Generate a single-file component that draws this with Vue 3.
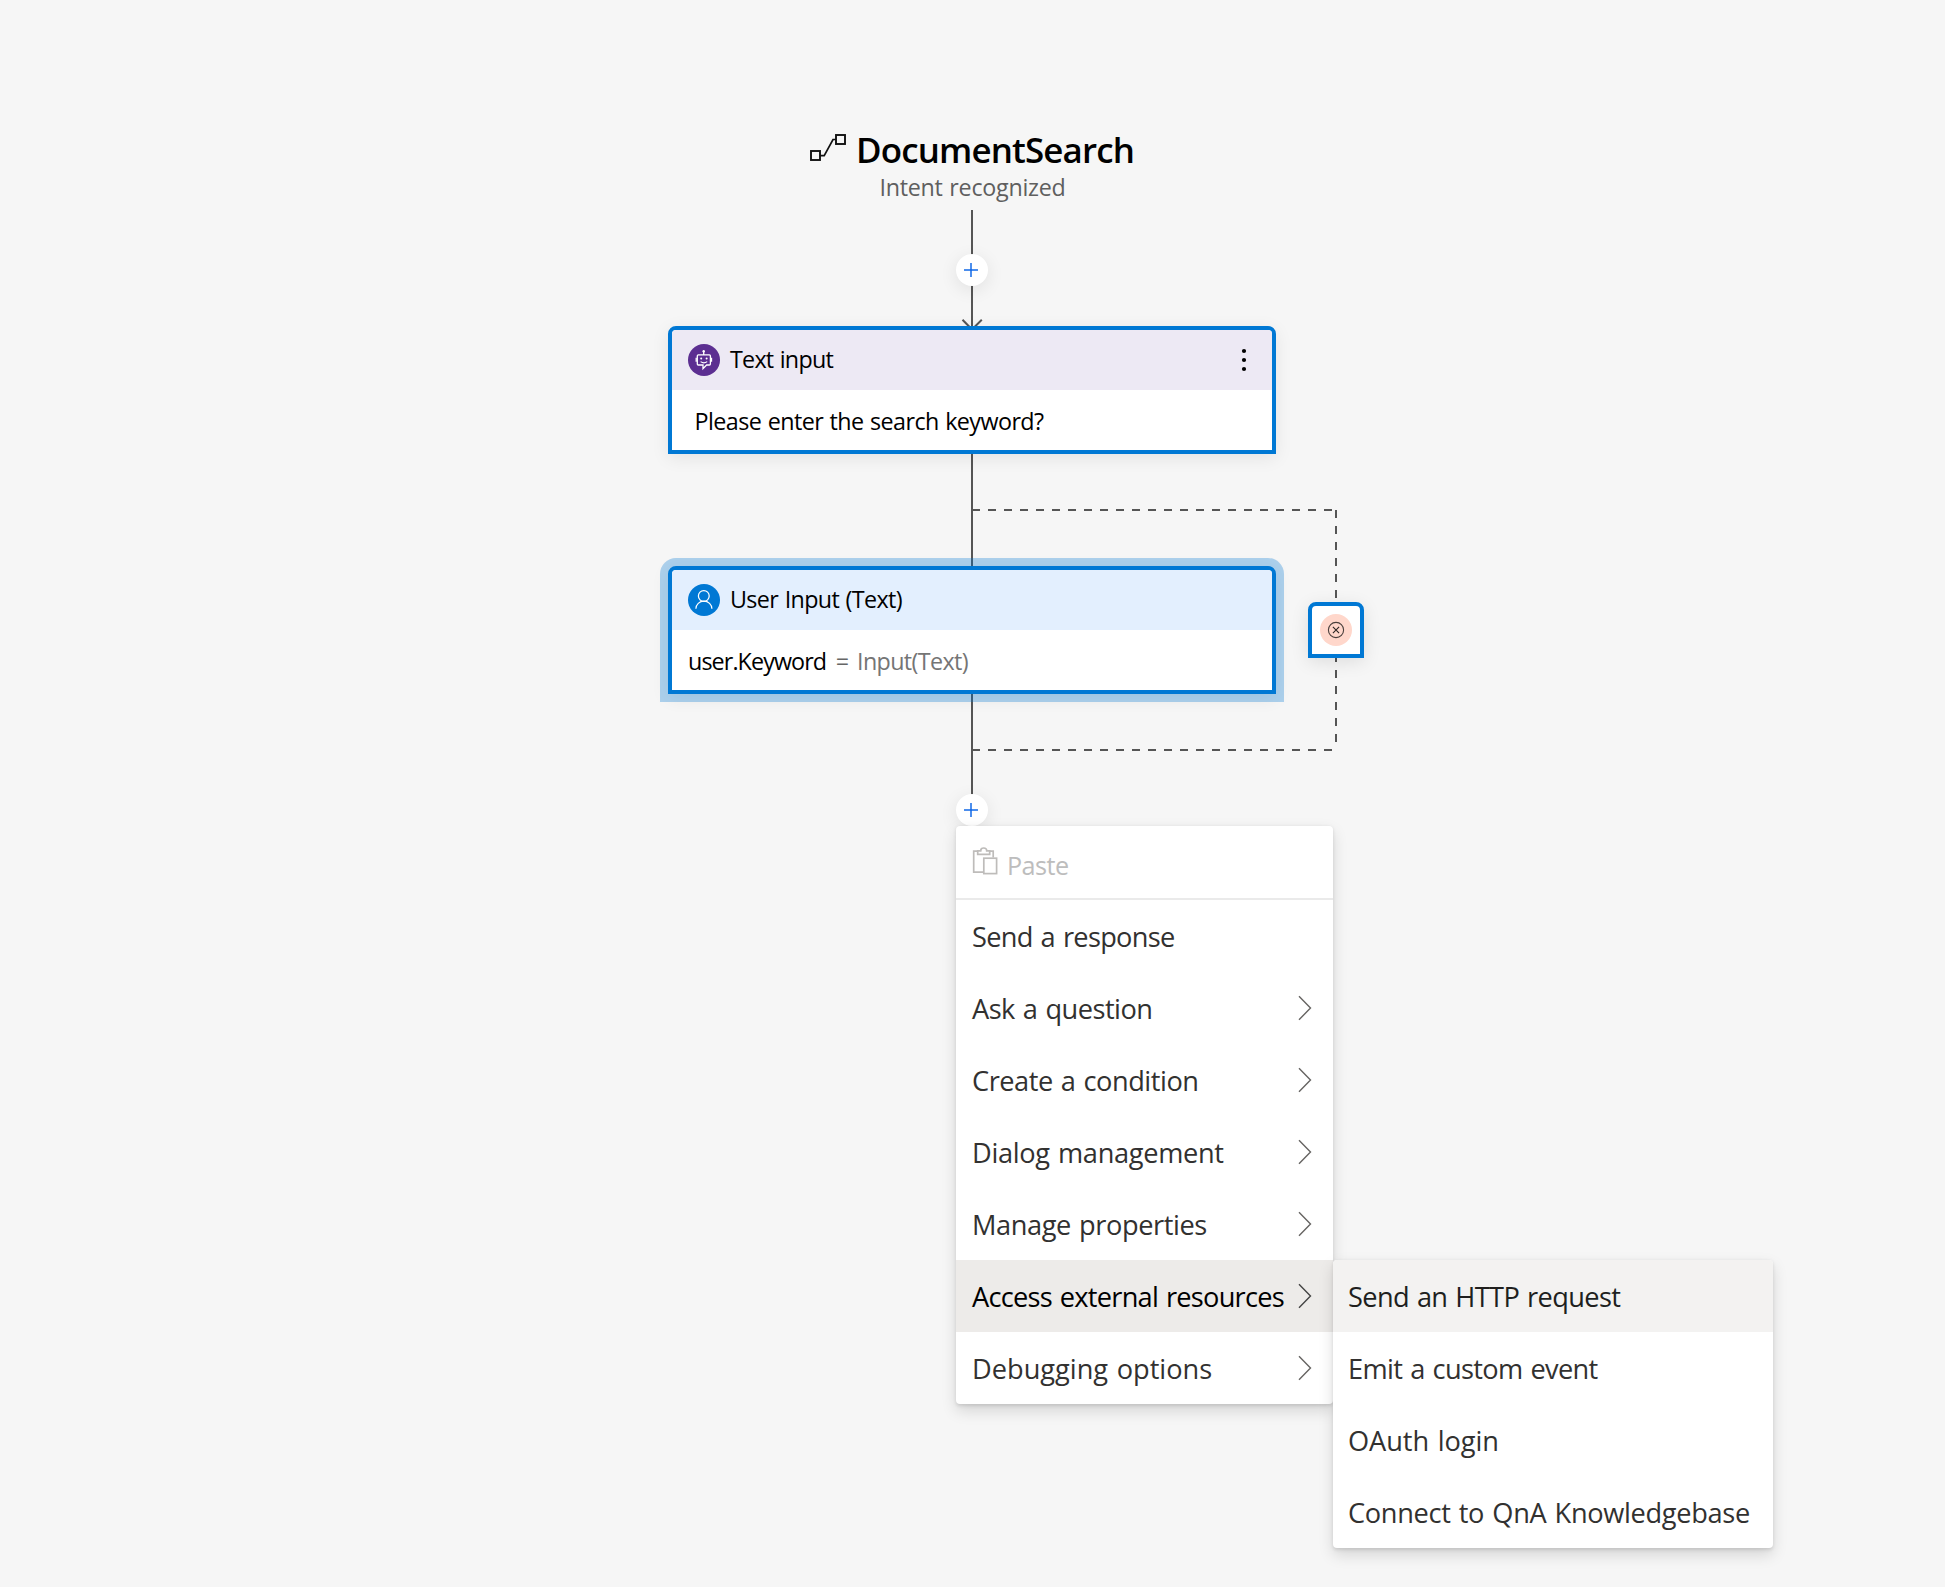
<script setup>
const menuItems = [
  { label: 'Send a response', spacing: -0.69 },
  { label: 'Ask a question', spacing: -0.53, sub: true },
  { label: 'Create a condition', spacing: -0.47, sub: true },
  { label: 'Dialog management', spacing: -0.32, sub: true },
  { label: 'Manage properties', spacing: -0.41, sub: true },
  { label: 'Access external resources', spacing: -0.74, sub: true, open: true },
  { label: 'Debugging options', spacing: 0, sub: true },
]
const subItems = [
  { label: 'Send an HTTP request', spacing: -0.63, hover: true },
  { label: 'Emit a custom event', spacing: -0.65 },
  { label: 'OAuth login', spacing: -0.05 },
  { label: 'Connect to QnA Knowledgebase', spacing: -0.33 },
]
const plusButtons = [270, 810]
</script>

<template>
  <main class="canvas">
    <svg class="edges" width="1945" height="1587" viewBox="0 0 1945 1587" fill="none">
      <g stroke="#555" stroke-width="2">
        <path d="M972 210V810" />
        <path d="M962.5 319.8L972 329.5L981.8 319.8" />
        <g stroke-dasharray="8 8">
          <path d="M972 510H1336" />
          <path d="M1336 510V750" />
          <path d="M972 750H1336" />
        </g>
      </g>
    </svg>

    <header class="trigger">
      <div class="trigger-name">
        <svg width="38" height="30" viewBox="0 0 38 30" fill="none" stroke="#111" stroke-width="1.9">
          <rect x="2" y="18" width="9" height="9" />
          <rect x="27" y="2" width="9" height="9" />
          <path d="M11 22.7H15.2L24 6.5H27" stroke-width="1.7" />
        </svg>
        <h1>DocumentSearch</h1>
      </div>
      <p>Intent recognized</p>
    </header>

    <section class="node prompt">
      <div class="node-head">
        <svg class="avatar" width="32" height="32" viewBox="0 0 32 32" fill="none">
          <circle cx="16" cy="16" r="16" fill="#5c2e91" />
          <g stroke="#fff" stroke-width="1.3">
            <path d="M11.5 21H10.2Q9.3 21 9.3 20V11.9Q9.3 10.9 10.3 10.9H21.4Q22.4 10.9 22.4 11.9V20Q22.4 21 21.4 21H18.6L15 24.6V21H11" />
            <path d="M15.7 7V11M8.2 13.8V17.8M23.5 13.8V17.8" />
            <path d="M12.6 17.6Q15.9 20.2 19.2 17.6" stroke-width="1.2" />
          </g>
          <g fill="#fff">
            <circle cx="15.7" cy="7.2" r="1.2" />
            <circle cx="13.2" cy="14.5" r="1" />
            <circle cx="18.6" cy="14.5" r="1" />
          </g>
        </svg>
        <span class="t-prompt-head">Text input</span>
        <svg class="more" width="6" height="24" viewBox="0 0 6 24" fill="#000">
          <circle cx="3" cy="3" r="2.1" />
          <circle cx="3" cy="12" r="2.1" />
          <circle cx="3" cy="21" r="2.1" />
        </svg>
      </div>
      <div class="node-body"><span class="t-question">Please enter the search keyword?</span></div>
    </section>

    <section class="node answer">
      <div class="node-head">
        <svg class="avatar" width="32" height="32" viewBox="0 0 32 32" fill="none">
          <circle cx="16" cy="16" r="16" fill="#0078d4" />
          <g stroke="#fff" stroke-width="1.25">
            <circle cx="15.8" cy="12" r="5.4" />
            <path d="M7.9 24.8A8 7.7 0 0 1 23.9 24.8" />
          </g>
        </svg>
        <span class="t-answer-head">User Input (Text)</span>
      </div>
      <div class="node-body">
        <span class="t-variable">user.Keyword</span>
        <span class="t-equals">=</span>
        <span class="t-value">Input(Text)</span>
      </div>
    </section>

    <section class="invalid">
      <svg width="32" height="32" viewBox="0 0 32 32" fill="none">
        <circle cx="16" cy="16" r="16" fill="#ffd7cb" />
        <circle cx="16" cy="16" r="7.6" stroke="#4a3f3c" stroke-width="1.1" />
        <path d="M12.9 12.9L19.1 19.1M19.1 12.9L12.9 19.1" stroke="#2b2523" stroke-width="1.1" />
      </svg>
    </section>

    <button v-for="y in plusButtons" :key="y" class="plus" :style="{ top: y - 16 + 'px' }">
      <svg width="32" height="32" viewBox="0 0 32 32">
        <path d="M8 16H22M15 9V23" stroke="#1a6ee8" stroke-opacity=".78" stroke-width="2" />
        <path d="M14 15H16V17H14Z" fill="#1a6ee8" />
      </svg>
    </button>

    <nav class="menu">
      <div class="item paste">
        <svg width="26" height="28" viewBox="0 0 26 28" fill="none" stroke="#bebcba" stroke-width="1.7">
          <path d="M11 25.2H1.7V4.2H5.9M17.5 4.2H21.2V10.4" />
          <path d="M5.7 3.9V7.3H17.7V3.9H14.7Q14.7 1 11.7 1Q8.7 1 8.7 3.9Z" />
          <rect x="11.8" y="11.2" width="12.8" height="15.4" />
        </svg>
        <span>Paste</span>
      </div>
      <div v-for="item in menuItems" :key="item.label" class="item" :class="{ open: item.open }">
        <span :style="{ letterSpacing: item.spacing + 'px' }">{{ item.label }}</span>
        <svg v-if="item.sub" class="chevron" width="14" height="26" viewBox="0 0 14 26" fill="none" stroke="currentColor" stroke-width="1.4">
          <path d="M1 1.2L12.5 13L1 24.8" />
        </svg>
      </div>
    </nav>

    <nav class="menu submenu">
      <div v-for="item in subItems" :key="item.label" class="item" :class="{ hover: item.hover }">
        <span :style="{ letterSpacing: item.spacing + 'px' }">{{ item.label }}</span>
      </div>
    </nav>
  </main>
</template>

<style>
body {
  margin: 0;
  background: #f6f6f6;
}
</style>

<style scoped>
.canvas {
  position: relative;
  width: 1945px;
  height: 1587px;
  overflow: hidden;
  background: #f6f6f6;
  font-family: "Open Sans", "Noto Sans", sans-serif;
  font-size: 23.3px;
  color: #000;
  white-space: nowrap;
}
.canvas * {
  box-sizing: border-box;
}
.edges {
  position: absolute;
  inset: 0;
}
.trigger {
  position: absolute;
  left: 809px;
  top: 124px;
  width: 326px;
}
.trigger-name {
  display: flex;
  align-items: center;
  height: 50px;
  gap: 9px;
}
.trigger-name svg {
  margin-bottom: 2px;
}
.trigger h1 {
  margin: 0;
  padding-top: 2px;
  font-size: 34.9px;
  font-weight: 600;
  line-height: 50px;
  letter-spacing: -0.84px;
}
.trigger p {
  margin: -2px 0 0 70.5px;
  line-height: 30px;
  letter-spacing: -0.28px;
  word-spacing: 1px;
  color: #5f5f5f;
}

.node {
  position: absolute;
  left: 668px;
  width: 608px;
  height: 128px;
  border: 4px solid #0078d4;
  border-radius: 8px 8px 0 0;
  background: #fff;
}
.prompt {
  top: 326px;
  box-shadow: 0 4px 18px rgba(0, 0, 0, 0.08);
}
.answer {
  top: 566px;
  box-shadow: 0 0 0 8px rgba(0, 120, 212, 0.3), 0 4px 18px rgba(0, 0, 0, 0.08);
}
.node-head,
.node-body {
  display: flex;
  align-items: center;
  height: 60px;
  padding: 0 16px;
}
.node-head {
  gap: 10px;
  border-radius: 4px 4px 0 0;
}
.prompt .node-head {
  background: #ede9f4;
}
.answer .node-head {
  background: #e3effe;
}
.node-head span {
  padding-bottom: 2px;
}
.node-body span {
  padding-top: 2px;
}
.more {
  margin-left: auto;
  margin-right: 9px;
}
.t-prompt-head {
  letter-spacing: -0.75px;
  word-spacing: 1px;
}
.t-question {
  margin-left: 6.5px;
  letter-spacing: -0.57px;
  word-spacing: 1px;
}
.t-answer-head {
  letter-spacing: -0.62px;
  word-spacing: 1px;
}
.t-variable {
  letter-spacing: -0.9px;
}
.t-equals {
  margin: 0 8px 0 9.5px;
  color: #666;
}
.t-value {
  letter-spacing: -0.63px;
  color: #757575;
}

.invalid {
  position: absolute;
  left: 1308px;
  top: 602px;
  display: grid;
  place-items: center;
  width: 56px;
  height: 56px;
  border: 4px solid #0078d4;
  border-radius: 8px 8px 0 0;
  background: #fff;
  box-shadow: 0 4px 18px rgba(0, 0, 0, 0.1);
}

.plus {
  position: absolute;
  left: 956px;
  width: 32px;
  height: 32px;
  padding: 0;
  border: 0;
  border-radius: 50%;
  background: #fff;
  box-shadow: 0 4px 18px rgba(0, 0, 0, 0.09);
}
.plus svg {
  display: block;
}

.menu {
  position: absolute;
  left: 956px;
  top: 826px;
  width: 377px;
  overflow: hidden;
  border-radius: 4px;
  background: #fff;
  box-shadow: 0 6.4px 14.4px rgba(0, 0, 0, 0.132), 0 1.2px 3.6px rgba(0, 0, 0, 0.108);
  font-size: 27.2px;
  word-spacing: 1.5px;
  color: #323130;
}
.submenu {
  left: 1333px;
  top: 1260px;
  width: 440px;
}
.item {
  display: flex;
  align-items: center;
  height: 72px;
  padding: 0 21px 0 16px;
}
.submenu .item {
  padding-left: 15px;
}
.item span {
  padding-top: 1px;
}
.chevron {
  margin-left: auto;
  color: #666462;
}
.open {
  background: #edebe9;
  color: #000;
}
.open .chevron {
  color: #444;
}
.hover {
  background: #f3f2f1;
  color: #201f1e;
}
.paste {
  height: 74px;
  gap: 9px;
  border-bottom: 2px solid #eaeaea;
  font-size: 25.2px;
  letter-spacing: -0.55px;
  color: #bdbdbd;
}
.paste svg {
  margin-bottom: 2px;
}
.paste span {
  padding-top: 5px;
}
</style>
